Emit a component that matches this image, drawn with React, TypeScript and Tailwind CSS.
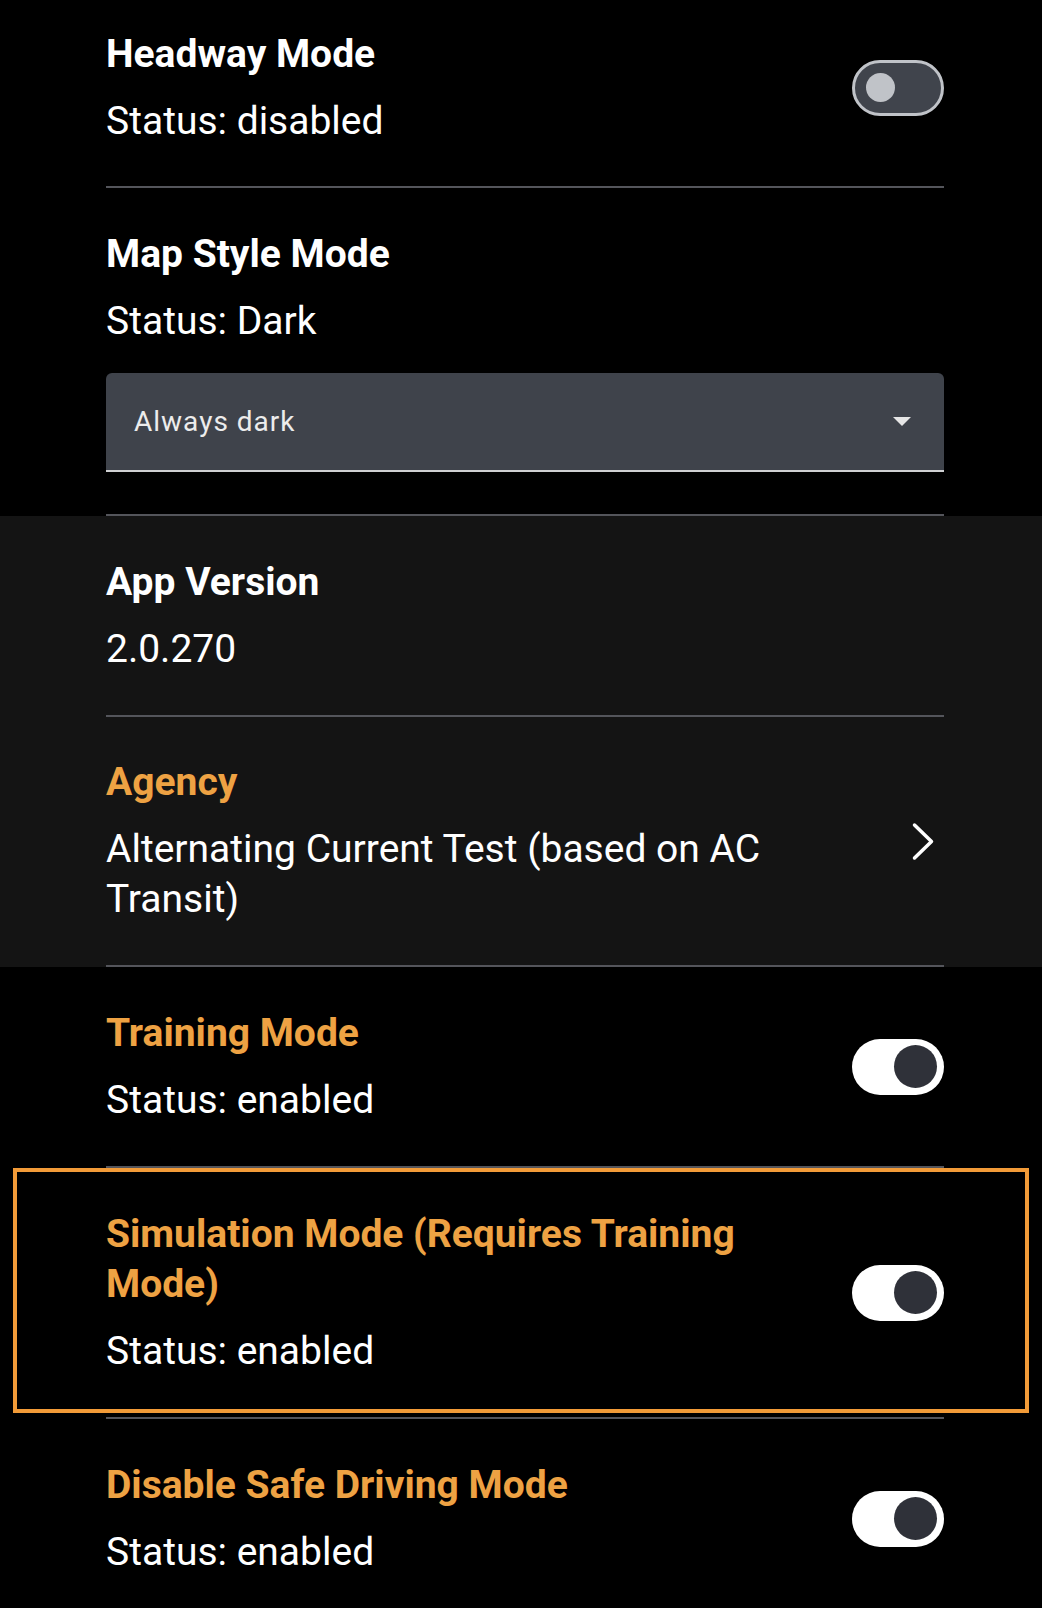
import type { ReactNode } from "react"

const ORANGE = "text-[#eea243]"

function Toggle({ on }: { on: boolean }) {
  if (on) {
    return (
      <div className="flex h-[56px] w-[92px] items-center justify-end rounded-full bg-white pr-[7px]">
        <div className="h-[43px] w-[43px] rounded-full bg-[#2f3139]" />
      </div>
    )
  }
  return (
    <div className="flex h-[56px] w-[92px] items-center rounded-full border-[3px] border-[#c0c3c8] bg-[#40444c] pl-[11px]">
      <div className="h-[29px] w-[29px] rounded-full bg-[#c0c3c8]" />
    </div>
  )
}

function Chevron() {
  return (
    <svg width="24" height="40" viewBox="0 0 24 40" fill="none" className="mr-[9px]">
      <polyline
        points="3.5,4 20.5,20.5 3.5,37"
        stroke="#ffffff"
        strokeWidth="3.5"
        strokeLinecap="round"
        strokeLinejoin="round"
      />
    </svg>
  )
}

function Divider() {
  return <div className="ml-[106px] mr-[98px] h-[2px] bg-[#54555b]" />
}

interface RowProps {
  title: string
  accent?: boolean
  status: string
  widget?: ReactNode
  pad?: string
  children?: ReactNode
}

function SettingRow({ title, accent, status, widget, pad = "pt-[41px] pb-[41px]", children }: RowProps) {
  return (
    <div className={`pl-[106px] pr-[98px] ${pad}`}>
      <div className="flex items-center gap-[16px]">
        <div className="min-w-0 flex-1">
          <div className={`text-[39px] font-bold leading-[50px] ${accent ? ORANGE : "text-white"}`}>
            {title}
          </div>
          <div className="mt-[17px] text-[39px] leading-[50px] text-white">{status}</div>
        </div>
        {widget && <div className="flex w-[92px] shrink-0 justify-end">{widget}</div>}
      </div>
      {children}
    </div>
  )
}

export default function App() {
  return (
    <div className="h-[1608px] w-[1042px] overflow-hidden bg-black font-['Roboto','Noto_Sans',sans-serif] antialiased">
      <SettingRow
        title="Headway Mode"
        status="Status: disabled"
        widget={<Toggle on={false} />}
        pad="pt-[29px] pb-[40px]"
      />
      <Divider />

      <SettingRow title="Map Style Mode" status="Status: Dark" pad="pt-[41px] pb-[42px]">
        <div className="mt-[27px] flex h-[99px] items-center justify-between rounded-t-[6px] border-b-2 border-[#d0d1d3] bg-[#3f434b] pl-[28px] pr-[33px]">
          <span className="text-[28px] tracking-[1px] text-[#ececec]">Always dark</span>
          <svg width="18" height="9" viewBox="0 0 18 9">
            <polygon points="0,0 18,0 9,9" fill="#e6e6e6" />
          </svg>
        </div>
      </SettingRow>
      <Divider />

      <div className="bg-[#141414]">
        <SettingRow title="App Version" status="2.0.270" />
        <Divider />
        <SettingRow
          title="Agency"
          accent
          status="Alternating Current Test (based on AC Transit)"
          widget={<Chevron />}
          pad="pt-[40px] pb-[41px]"
        />
        <Divider />
      </div>

      <SettingRow title="Training Mode" accent status="Status: enabled" widget={<Toggle on />} />
      <Divider />

      <div className="relative">
        <SettingRow
          title="Simulation Mode (Requires Training Mode)"
          accent
          status="Status: enabled"
          widget={<Toggle on />}
        />
        <div className="pointer-events-none absolute bottom-[4px] left-[13px] right-[13px] top-0 border-[4px] border-[#f29b38]" />
      </div>
      <Divider />

      <SettingRow title="Disable Safe Driving Mode" accent status="Status: enabled" widget={<Toggle on />} />
    </div>
  )
}
